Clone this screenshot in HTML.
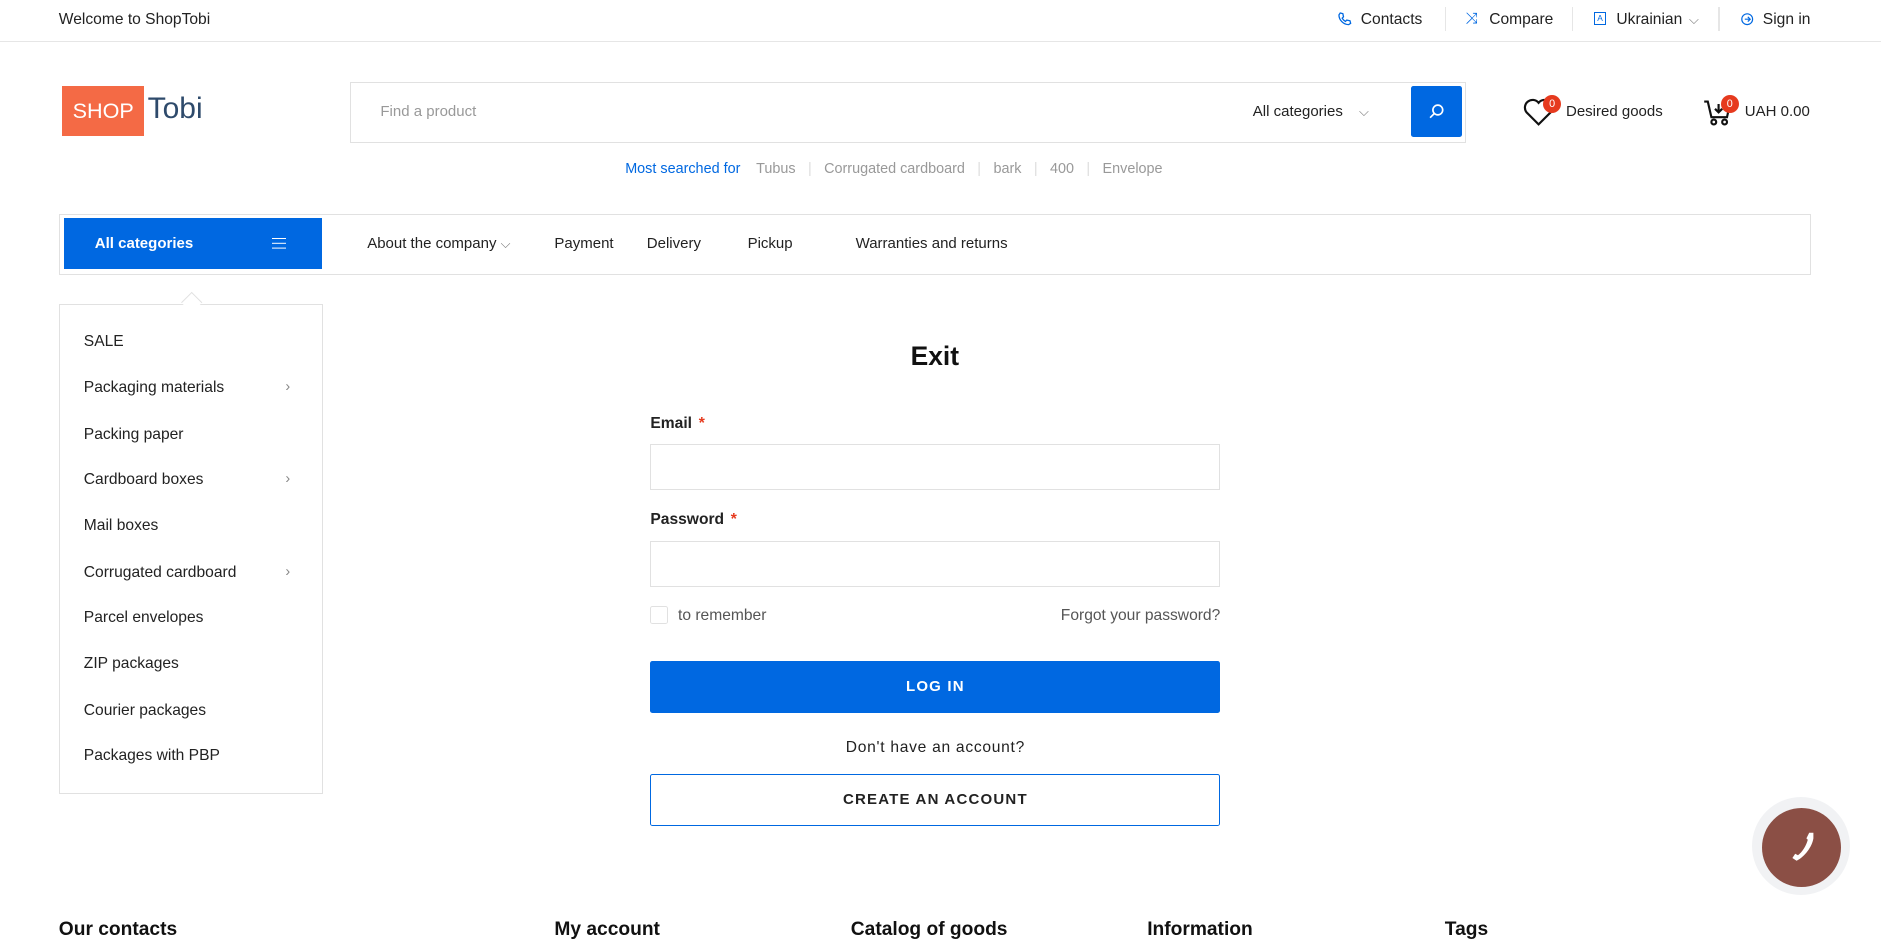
<!DOCTYPE html>
<html><head><meta charset="utf-8"><style>
html{zoom:1.2}
body{margin:0;width:1568px;height:793px;overflow:hidden;font-family:"Liberation Sans",sans-serif;color:#222;background:#fff;position:relative;font-size:13px}
.a{position:absolute;white-space:nowrap}
.top{position:absolute;left:0;top:0;width:1568px;height:34px;border-bottom:1px solid #e6e6e6}
.sep{position:absolute;top:6px;width:1px;height:20px;background:#e6e6e6}
.blue{color:#0068e1}
.box{position:absolute;border:1px solid #e1e1e1;box-sizing:border-box}
.side div{position:absolute;left:20px;font-size:13px;color:#222}
.chev{position:absolute;left:188px;color:#888;font-size:12px}
.foot{position:absolute;top:766px;font-size:16px;font-weight:bold;color:#111}
.ms span.s{color:#ddd;margin:0 7px}
</style></head><body>
<div class="top"></div>
<div class="a" style="left:49px;top:9px">Welcome to ShopTobi</div>
<svg class="a" style="left:1114px;top:9px" width="13" height="13" viewBox="0 0 24 24" fill="none" stroke="#0068e1" stroke-width="2"><path d="M5 3l4 1 1 5-2 2a12 12 0 0 0 5 5l2-2 5 1 1 4-3 2C10 21 3 14 3 6z"/></svg>
<div class="a" style="left:1134px;top:9px">Contacts</div>
<div class="sep" style="left:1204px"></div>
<div class="a blue" style="left:1221px;top:8px;font-size:13px">⤨</div>
<div class="a" style="left:1241px;top:9px">Compare</div>
<div class="sep" style="left:1310px"></div>
<div class="a" style="left:1328px;top:10px;width:9px;height:9px;border:1px solid #0068e1;font-size:7px;line-height:9px;text-align:center;color:#0068e1">A</div>
<div class="a" style="left:1347px;top:9px">Ukrainian <span style="color:#777;font-size:11px;margin-left:2px">⌵</span></div>
<div class="sep" style="left:1432px"></div>
<svg class="a" style="left:1450px;top:10px" width="12" height="12" viewBox="0 0 24 24" fill="none" stroke="#0068e1" stroke-width="2"><circle cx="12" cy="12" r="9"/><path d="M8 12h8M13 8l4 4-4 4"/></svg>
<div class="a" style="left:1469px;top:9px">Sign in</div>

<div class="a" style="left:52px;top:72px;width:68px;height:41px;background:#f46a45;color:#fff;font-size:18px;line-height:41px;text-align:center">SHOP</div>
<div class="a" style="left:123px;top:77px;font-size:25px;color:#2e4a6b">Tobi</div>

<div class="box" style="left:292px;top:68px;width:930px;height:51px"></div>
<div class="a" style="left:317px;top:86px;color:#999;font-size:12.5px">Find a product</div>
<div class="a" style="left:1044px;top:86px;font-size:12.5px">All categories <span style="color:#777;margin-left:10px;font-size:11px">⌵</span></div>
<div class="a" style="left:1176px;top:72px;width:42px;height:42px;background:#0068e1;border-radius:2px"></div>
<svg class="a" style="left:1190px;top:86px" width="14" height="14" viewBox="0 0 24 24" fill="none" stroke="#fff" stroke-width="2.4"><circle cx="14" cy="10" r="7"/><path d="M9 15l-6 6"/></svg>

<svg class="a" style="left:1269px;top:82px" width="26" height="24" viewBox="0 0 26 24" fill="none" stroke="#111" stroke-width="1.8"><path d="M13 22L3 12a5.5 5.5 0 0 1 10-8 5.5 5.5 0 0 1 10 8z"/></svg>
<div class="a" style="left:1286px;top:79px;width:15px;height:15px;border-radius:50%;background:#e63a1e;color:#fff;font-size:9px;line-height:15px;text-align:center">0</div>
<div class="a" style="left:1305px;top:86px;font-size:12.5px">Desired goods</div>
<svg class="a" style="left:1419px;top:82px" width="26" height="24" viewBox="0 0 26 24" fill="none" stroke="#111" stroke-width="1.8"><path d="M1 3h3l3 13h13l2-9"/><circle cx="9" cy="20" r="2"/><circle cx="18" cy="20" r="2"/><path d="M13 5v7M10 9l3 3 3-3"/></svg>
<div class="a" style="left:1434px;top:79px;width:15px;height:15px;border-radius:50%;background:#e63a1e;color:#fff;font-size:9px;line-height:15px;text-align:center">0</div>
<div class="a" style="left:1454px;top:86px;font-size:12.5px">UAH 0.00</div>

<div class="a ms" style="left:521px;top:134px;font-size:12px;color:#999"><span class="blue">Most searched for</span>&nbsp;&nbsp;&nbsp; Tubus<span class="s">&nbsp;|&nbsp;</span>Corrugated cardboard<span class="s">&nbsp;|&nbsp;</span>bark<span class="s">&nbsp;|&nbsp;</span>400<span class="s">&nbsp;|&nbsp;</span>Envelope</div>

<div class="box" style="left:49px;top:178px;width:1460px;height:51px"></div>
<div class="a" style="left:53px;top:182px;width:215px;height:42px;background:#0068e1"></div>
<div class="a" style="left:79px;top:196px;color:#fff;font-weight:bold;font-size:12.5px">All categories</div>
<div class="a" style="left:227px;top:198px;width:11px;height:1.5px;background:#fff;box-shadow:0 4px 0 #fff,0 8px 0 #fff"></div>
<div class="a" style="left:306px;top:196px;font-size:12.5px">About the company <span style="color:#777;font-size:11px">⌵</span></div>
<div class="a" style="left:462px;top:196px;font-size:12.5px">Payment</div>
<div class="a" style="left:539px;top:196px;font-size:12.5px">Delivery</div>
<div class="a" style="left:623px;top:196px;font-size:12.5px">Pickup</div>
<div class="a" style="left:713px;top:196px;font-size:12.5px">Warranties and returns</div>

<div class="box side" style="left:49px;top:253px;width:220px;height:409px">
<div style="top:24px">SALE</div>
<div style="top:62px">Packaging materials</div><span class="chev" style="top:62px">›</span>
<div style="top:101px">Packing paper</div>
<div style="top:139px">Cardboard boxes</div><span class="chev" style="top:139px">›</span>
<div style="top:177px">Mail boxes</div>
<div style="top:216px">Corrugated cardboard</div><span class="chev" style="top:216px">›</span>
<div style="top:254px">Parcel envelopes</div>
<div style="top:292px">ZIP packages</div>
<div style="top:331px">Courier packages</div>
<div style="top:369px">Packages with PBP</div>
</div>
<div class="a" style="left:153px;top:246px;width:12px;height:12px;background:#fff;border-left:1px solid #e1e1e1;border-top:1px solid #e1e1e1;transform:rotate(45deg)"></div>

<div class="a" style="left:0;width:1558px;text-align:center;top:284px;font-size:22px;color:#111;font-weight:bold">Exit</div>
<div class="a" style="left:542px;top:346px;font-weight:bold;color:#222">Email <span style="color:#e63a1e;margin-left:2px">*</span></div>
<div class="box" style="left:542px;top:370px;width:475px;height:38px"></div>
<div class="a" style="left:542px;top:426px;font-weight:bold;color:#222">Password <span style="color:#e63a1e;margin-left:2px">*</span></div>
<div class="box" style="left:542px;top:451px;width:475px;height:38px"></div>
<div class="box" style="left:542px;top:505px;width:15px;height:15px;border-radius:2px"></div>
<div class="a" style="left:565px;top:506px;color:#555">to remember</div>
<div class="a" style="left:884px;top:506px;color:#555">Forgot your password?</div>
<div class="a" style="left:542px;top:551px;width:475px;height:43px;background:#0068e1;border-radius:2px;color:#fff;font-weight:bold;text-align:center;line-height:43px;letter-spacing:1px;font-size:12.5px">LOG IN</div>
<div class="a" style="left:542px;width:475px;text-align:center;top:616px;letter-spacing:.6px">Don't have an account?</div>
<div class="a" style="left:542px;top:645px;width:475px;height:43px;box-sizing:border-box;border:1px solid #0068e1;border-radius:2px;color:#222;font-weight:bold;text-align:center;line-height:41px;letter-spacing:1px;font-size:12.5px">CREATE AN ACCOUNT</div>

<div class="foot" style="left:49px">Our contacts</div>
<div class="foot" style="left:462px">My account</div>
<div class="foot" style="left:709px">Catalog of goods</div>
<div class="foot" style="left:956px">Information</div>
<div class="foot" style="left:1204px">Tags</div>

<div class="a" style="left:1460px;top:664px;width:82px;height:82px;border-radius:50%;background:#f1f2f4"></div>
<div class="a" style="left:1468px;top:673px;width:66px;height:66px;border-radius:50%;background:#8b4f45"></div>
<svg class="a" style="left:1487px;top:692px" width="28" height="28" viewBox="0 0 24 24"><path d="M18 2h3v4c-1 6-6 13-12 16l-3-2 2-3 2 1c3-2 6-7 7-11l-1-1z" fill="#fff"/></svg>
</body></html>
